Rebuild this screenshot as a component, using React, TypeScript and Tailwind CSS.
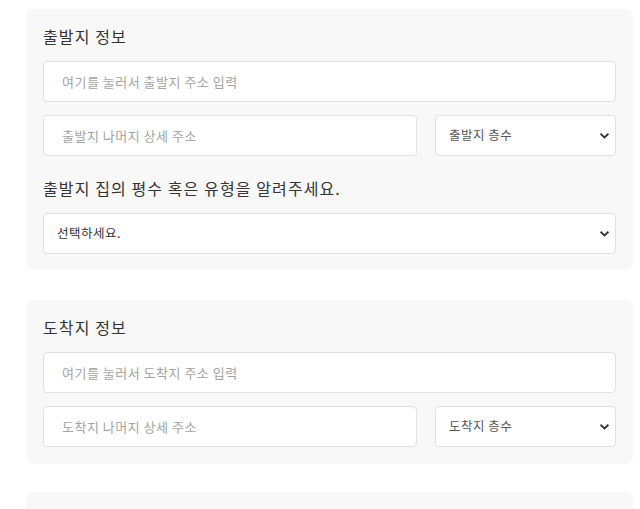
import React from "react";

const font = { fontFamily: '"Noto Sans CJK KR", "Noto Sans", sans-serif' };

function Chevron() {
  return (
    <svg
      className="pointer-events-none absolute right-[7px] top-1/2 -translate-y-1/2"
      width="9"
      height="6"
      viewBox="0 0 9 6"
      fill="none"
    >
      <path d="M1.2 1.3 L4.5 4.5 L7.8 1.3" stroke="#333" strokeWidth="1.8" strokeLinecap="square" />
    </svg>
  );
}

function Select({ label, className, textClass }: { label: string; className?: string; textClass: string }) {
  return (
    <div className={"relative " + (className ?? "")}>
      <select
        className={
          "h-[41px] w-full appearance-none rounded-[4px] border border-[#e0e0e0] bg-white pl-[13px] text-[12.5px] tracking-[0.5px] outline-none " +
          textClass
        }
        style={font}
        defaultValue=""
      >
        <option value="">{label}</option>
      </select>
      <Chevron />
    </div>
  );
}

function TextInput({ placeholder, className }: { placeholder: string; className?: string }) {
  return (
    <input
      type="text"
      placeholder={placeholder}
      className={
        "h-[41px] rounded-[4px] border border-[#e0e0e0] bg-white pl-[18px] text-[13px] tracking-[0.5px] text-[#333] outline-none placeholder:text-[#a3a3a3] " +
        (className ?? "")
      }
      style={font}
    />
  );
}

export default function App() {
  return (
    <div className="min-h-[509px] bg-white pl-[26px] pr-[7px] pt-[9px]" style={font}>
      <div className="rounded-[8px] bg-[#f8f8f8] px-[17px] pb-[16px] pt-[15px]">
        <h2 className="mb-[13px] text-[16px] leading-[24px] tracking-[1.1px] font-normal text-[#333]">출발지 정보</h2>
        <TextInput placeholder="여기를 눌러서 출발지 주소 입력" className="block w-full" />
        <div className="mt-[13px] flex gap-[18px]">
          <TextInput placeholder="출발지 나머지 상세 주소" className="min-w-0 flex-1" />
          <Select label="출발지 층수" className="w-[181px]" textClass="text-[#555]" />
        </div>
        <h3 className="mb-[13px] mt-[20px] text-[16px] leading-[24px] tracking-[1.1px] font-normal text-[#333]">
          출발지 집의 평수 혹은 유형을 알려주세요.
        </h3>
        <Select label="선택하세요." textClass="text-[#333]" />
      </div>

      <div className="mt-[30px] rounded-[8px] bg-[#f8f8f8] px-[17px] pb-[17px] pt-[15px]">
        <h2 className="mb-[13px] text-[16px] leading-[24px] tracking-[1.1px] font-normal text-[#333]">도착지 정보</h2>
        <TextInput placeholder="여기를 눌러서 도착지 주소 입력" className="block w-full" />
        <div className="mt-[13px] flex gap-[18px]">
          <TextInput placeholder="도착지 나머지 상세 주소" className="min-w-0 flex-1" />
          <Select label="도착지 층수" className="w-[181px]" textClass="text-[#555]" />
        </div>
      </div>

      <div className="mt-[28px] h-[120px] rounded-[8px] bg-[#f8f8f8]" />
    </div>
  );
}
